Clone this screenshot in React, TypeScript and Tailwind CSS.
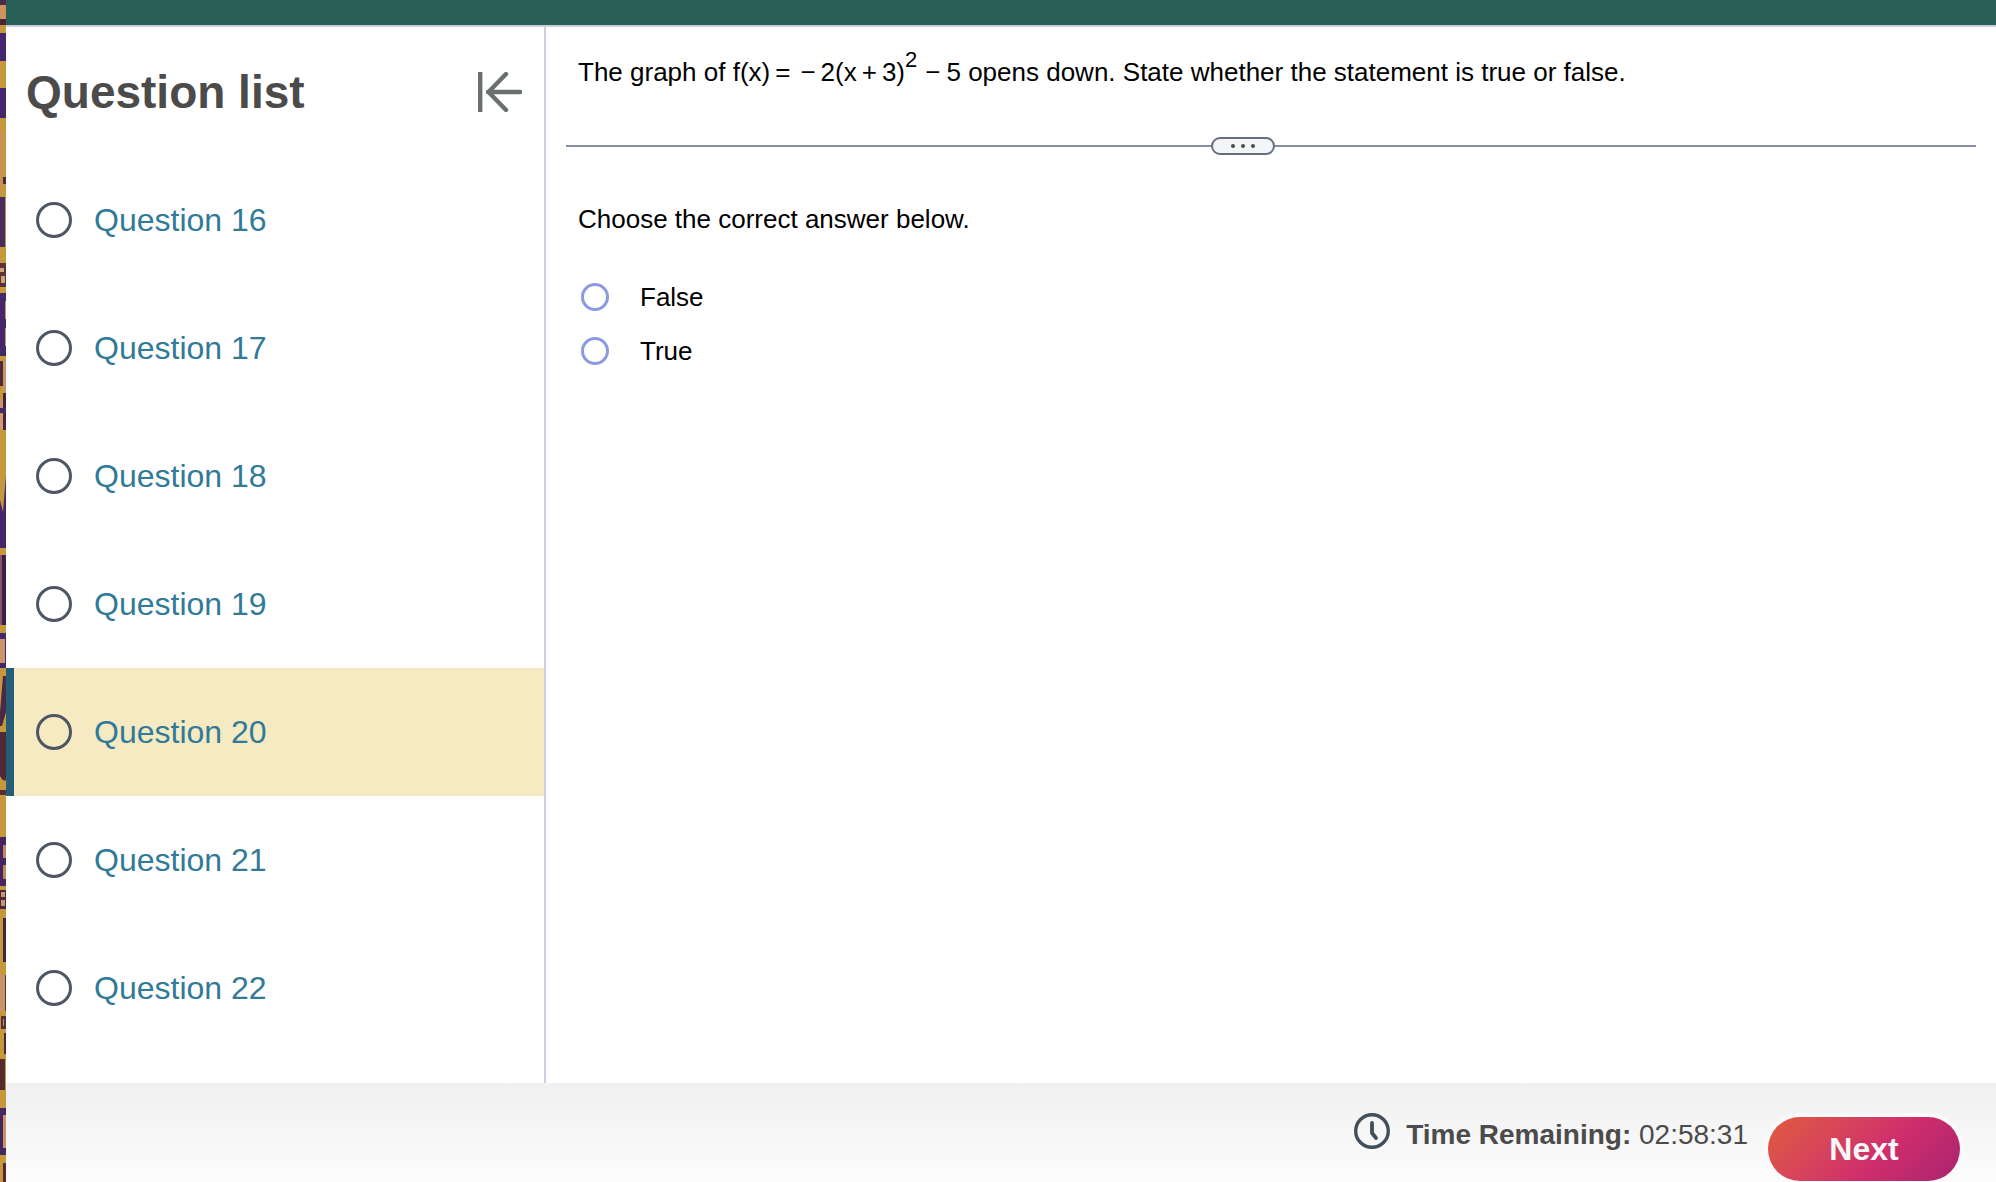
import { useState } from "react";

const questions = [16, 17, 18, 19, 20, 21, 22];
const answers = ["False", "True"];

// x, y, width, height, colour of each patch on the patterned strip
const patches: [number, number, number, number, string][] = [
  [0, 0, 6, 5, "#4a2a50"],
  [0, 6, 5, 13, "#cf9168"],
  [0, 19, 6, 6, "#4a2430"],
  [0, 33, 6, 28, "#45256e"],
  [0, 88, 6, 30, "#45256e"],
  [0, 130, 4, 60, "#c9914f"],
  [3, 177, 3, 7, "#4a2a35"],
  [0, 197, 6, 50, "#4a2c5c"],
  [5, 197, 1, 50, "#c08a5a"],
  [0, 263, 6, 24, "#5a3238"],
  [0, 268, 4, 4, "#d0a078"],
  [1, 276, 4, 7, "#d0a078"],
  [0, 293, 6, 63, "#452668"],
  [5, 301, 1, 18, "#c9946a"],
  [5, 328, 1, 18, "#c9946a"],
  [0, 361, 3, 25, "#502c34"],
  [3, 361, 3, 32, "#c9946a"],
  [3, 393, 3, 15, "#44223c"],
  [0, 400, 3, 8, "#c9946a"],
  [0, 408, 6, 5, "#452668"],
  [0, 414, 3, 16, "#cf9a70"],
  [3, 413, 3, 17, "#4a2440"],
  [0, 555, 6, 70, "#3c204a"],
  [0, 555, 2, 70, "#8a5560"],
  [0, 633, 6, 35, "#452668"],
  [0, 639, 5, 24, "#c9946a"],
  [0, 732, 6, 44, "#4e2a38"],
  [0, 790, 6, 5, "#542d36"],
  [0, 797, 5, 30, "#c9963f"],
  [0, 837, 6, 49, "#452460"],
  [3, 845, 3, 13, "#c08860"],
  [3, 865, 3, 14, "#c08860"],
  [0, 890, 6, 19, "#4a2440"],
  [1, 892, 4, 5, "#c9946a"],
  [1, 900, 4, 6, "#c9946a"],
  [3, 918, 3, 44, "#44243c"],
  [0, 975, 5, 36, "#c9946a"],
  [5, 975, 1, 36, "#5a3430"],
  [1, 1016, 5, 13, "#54303c"],
  [3, 1019, 1, 7, "#c9946a"],
  [4, 1033, 2, 21, "#4a2a35"],
  [0, 1059, 5, 31, "#54292f"],
  [0, 1108, 6, 47, "#452660"],
  [3, 1115, 3, 33, "#c9946a"],
  [3, 1163, 3, 19, "#54292f"],
];

function EdgeStrip() {
  return (
    <svg
      className="min-h-screen w-[6px] shrink-0 self-stretch bg-[#c6983c]"
      viewBox="0 0 6 1182"
      preserveAspectRatio="none"
      aria-hidden="true"
    >
      {patches.map(([x, y, w, h, fill]) => (
        <rect key={`${x}-${y}`} x={x} y={y} width={w} height={h} fill={fill} />
      ))}
      <path d="M6 475 L3 512 L0 500 V548 H6Z" fill="#46246c" />
      <path d="M3 676 H6 V712 L2 726 H0 V712Z" fill="#4a2848" />
      <path d="M0 776 L6 768 V780 Q3 782 0 776Z" fill="#4e2a38" />
    </svg>
  );
}

function CollapseIcon() {
  return (
    <svg
      width="44"
      height="42"
      viewBox="0 0 44 42"
      fill="none"
      stroke="#6a7070"
      strokeWidth="4.4"
      strokeLinecap="round"
      strokeLinejoin="round"
    >
      <path d="M2.2 1V41" strokeLinecap="butt" />
      <path d="M42 21H10" />
      <path d="M28 3L10.5 21L28 39" />
    </svg>
  );
}

function ClockIcon() {
  return (
    <svg
      width="36"
      height="36"
      viewBox="0 0 36 36"
      fill="none"
      stroke="#424e5c"
      strokeLinecap="round"
      strokeLinejoin="round"
    >
      <circle cx="18" cy="18" r="16.3" strokeWidth="3.4" />
      <path d="M18 10V20L22 25" strokeWidth="3.8" />
    </svg>
  );
}

function Sidebar() {
  const [current, setCurrent] = useState(20);

  return (
    <aside className="w-[540px] shrink-0 border-r-2 border-[#cbcedd]">
      <div className="flex h-[129px] items-center justify-between pr-[22px] pl-5">
        <h1 className="pt-[2px] text-[46px] font-bold text-[#4b4b4b]">
          Question list
        </h1>
        <button type="button" aria-label="Collapse question list">
          <CollapseIcon />
        </button>
      </div>

      <nav className="pb-[31px]">
        {questions.map((n) => (
          <a
            key={n}
            href={`#question-${n}`}
            onClick={() => setCurrent(n)}
            className={`flex h-32 items-center gap-[22px] border-l-8 pl-[22px] text-[32px] text-[#317a98] ${
              n === current
                ? "border-[#265e78] bg-[#f6eac2]"
                : "border-transparent"
            }`}
          >
            <span className="h-9 w-9 rounded-full border-3 border-[#4c5763]" />
            Question {n}
          </a>
        ))}
      </nav>
    </aside>
  );
}

function Problem() {
  return (
    <main className="min-w-0 flex-1 px-5 text-[26px] leading-8 text-black">
      <p className="px-3 pt-[29px]">
        The graph of f(x)
        <span className="ml-[5px]">=</span>
        <span className="mr-[5px] ml-[10px]">−</span>
        2(x
        <span className="mx-[5px]">+</span>
        3)
        <sup className="-top-[14px] text-[22px] leading-none">2</sup>
        <span className="mr-[6px] ml-2">−</span>5 opens down. State whether the
        statement is true or false.
      </p>

      <div className="mt-[49px] flex items-center">
        <div className="h-[2px] flex-[645] bg-[#868fa0]" />
        <button
          type="button"
          aria-label="Resize panels"
          className="flex h-[18px] w-16 items-center justify-center gap-[6px] rounded-full border-2 border-[#647080] bg-[#f3f5f7]"
        >
          <span className="h-1 w-1 rounded-full bg-[#4a4a4a]" />
          <span className="h-1 w-1 rounded-full bg-[#4a4a4a]" />
          <span className="h-1 w-1 rounded-full bg-[#4a4a4a]" />
        </button>
        <div className="h-[2px] flex-[701] bg-[#868fa0]" />
      </div>

      <fieldset className="mt-12 px-3">
        <legend>Choose the correct answer below.</legend>
        <div className="flex flex-col gap-[22px] pt-[46px]">
          {answers.map((answer) => (
            <label key={answer} className="flex items-center gap-[31px] pl-[3px]">
              <input
                type="radio"
                name="answer"
                value={answer}
                className="h-7 w-7 appearance-none rounded-full border-3 border-[#8c9be0] checked:border-8"
              />
              {answer}
            </label>
          ))}
        </div>
      </fieldset>
    </main>
  );
}

function Footer() {
  return (
    <footer className="flex items-start justify-end bg-linear-to-b from-[#f0f0f0] to-[#fcfcfc] pt-[30px] pr-9 pb-px text-[28px] text-[#4b4b4b]">
      <ClockIcon />
      <p className="ml-4 pt-[2px] leading-10">
        <strong>Time Remaining:</strong> <span>02:58:31</span>
      </p>
      <button
        type="button"
        className="mt-1 ml-5 h-16 w-48 rounded-full bg-linear-135 from-[#e05a3c] via-[#cf2d6c] via-60% to-[#a8246e] text-[32px] font-bold text-[#f8f8fb] ring-4 ring-[#fafafa]"
      >
        Next
      </button>
    </footer>
  );
}

export default function App() {
  return (
    <div className="flex min-h-screen bg-white font-['Liberation_Sans',Arial,sans-serif]">
      <EdgeStrip />
      <div className="flex min-w-0 flex-1 flex-col">
        <header className="h-[27px] border-b-2 border-[#cbcedd] bg-[#286057]" />
        <div className="flex flex-1">
          <Sidebar />
          <Problem />
        </div>
        <Footer />
      </div>
    </div>
  );
}
